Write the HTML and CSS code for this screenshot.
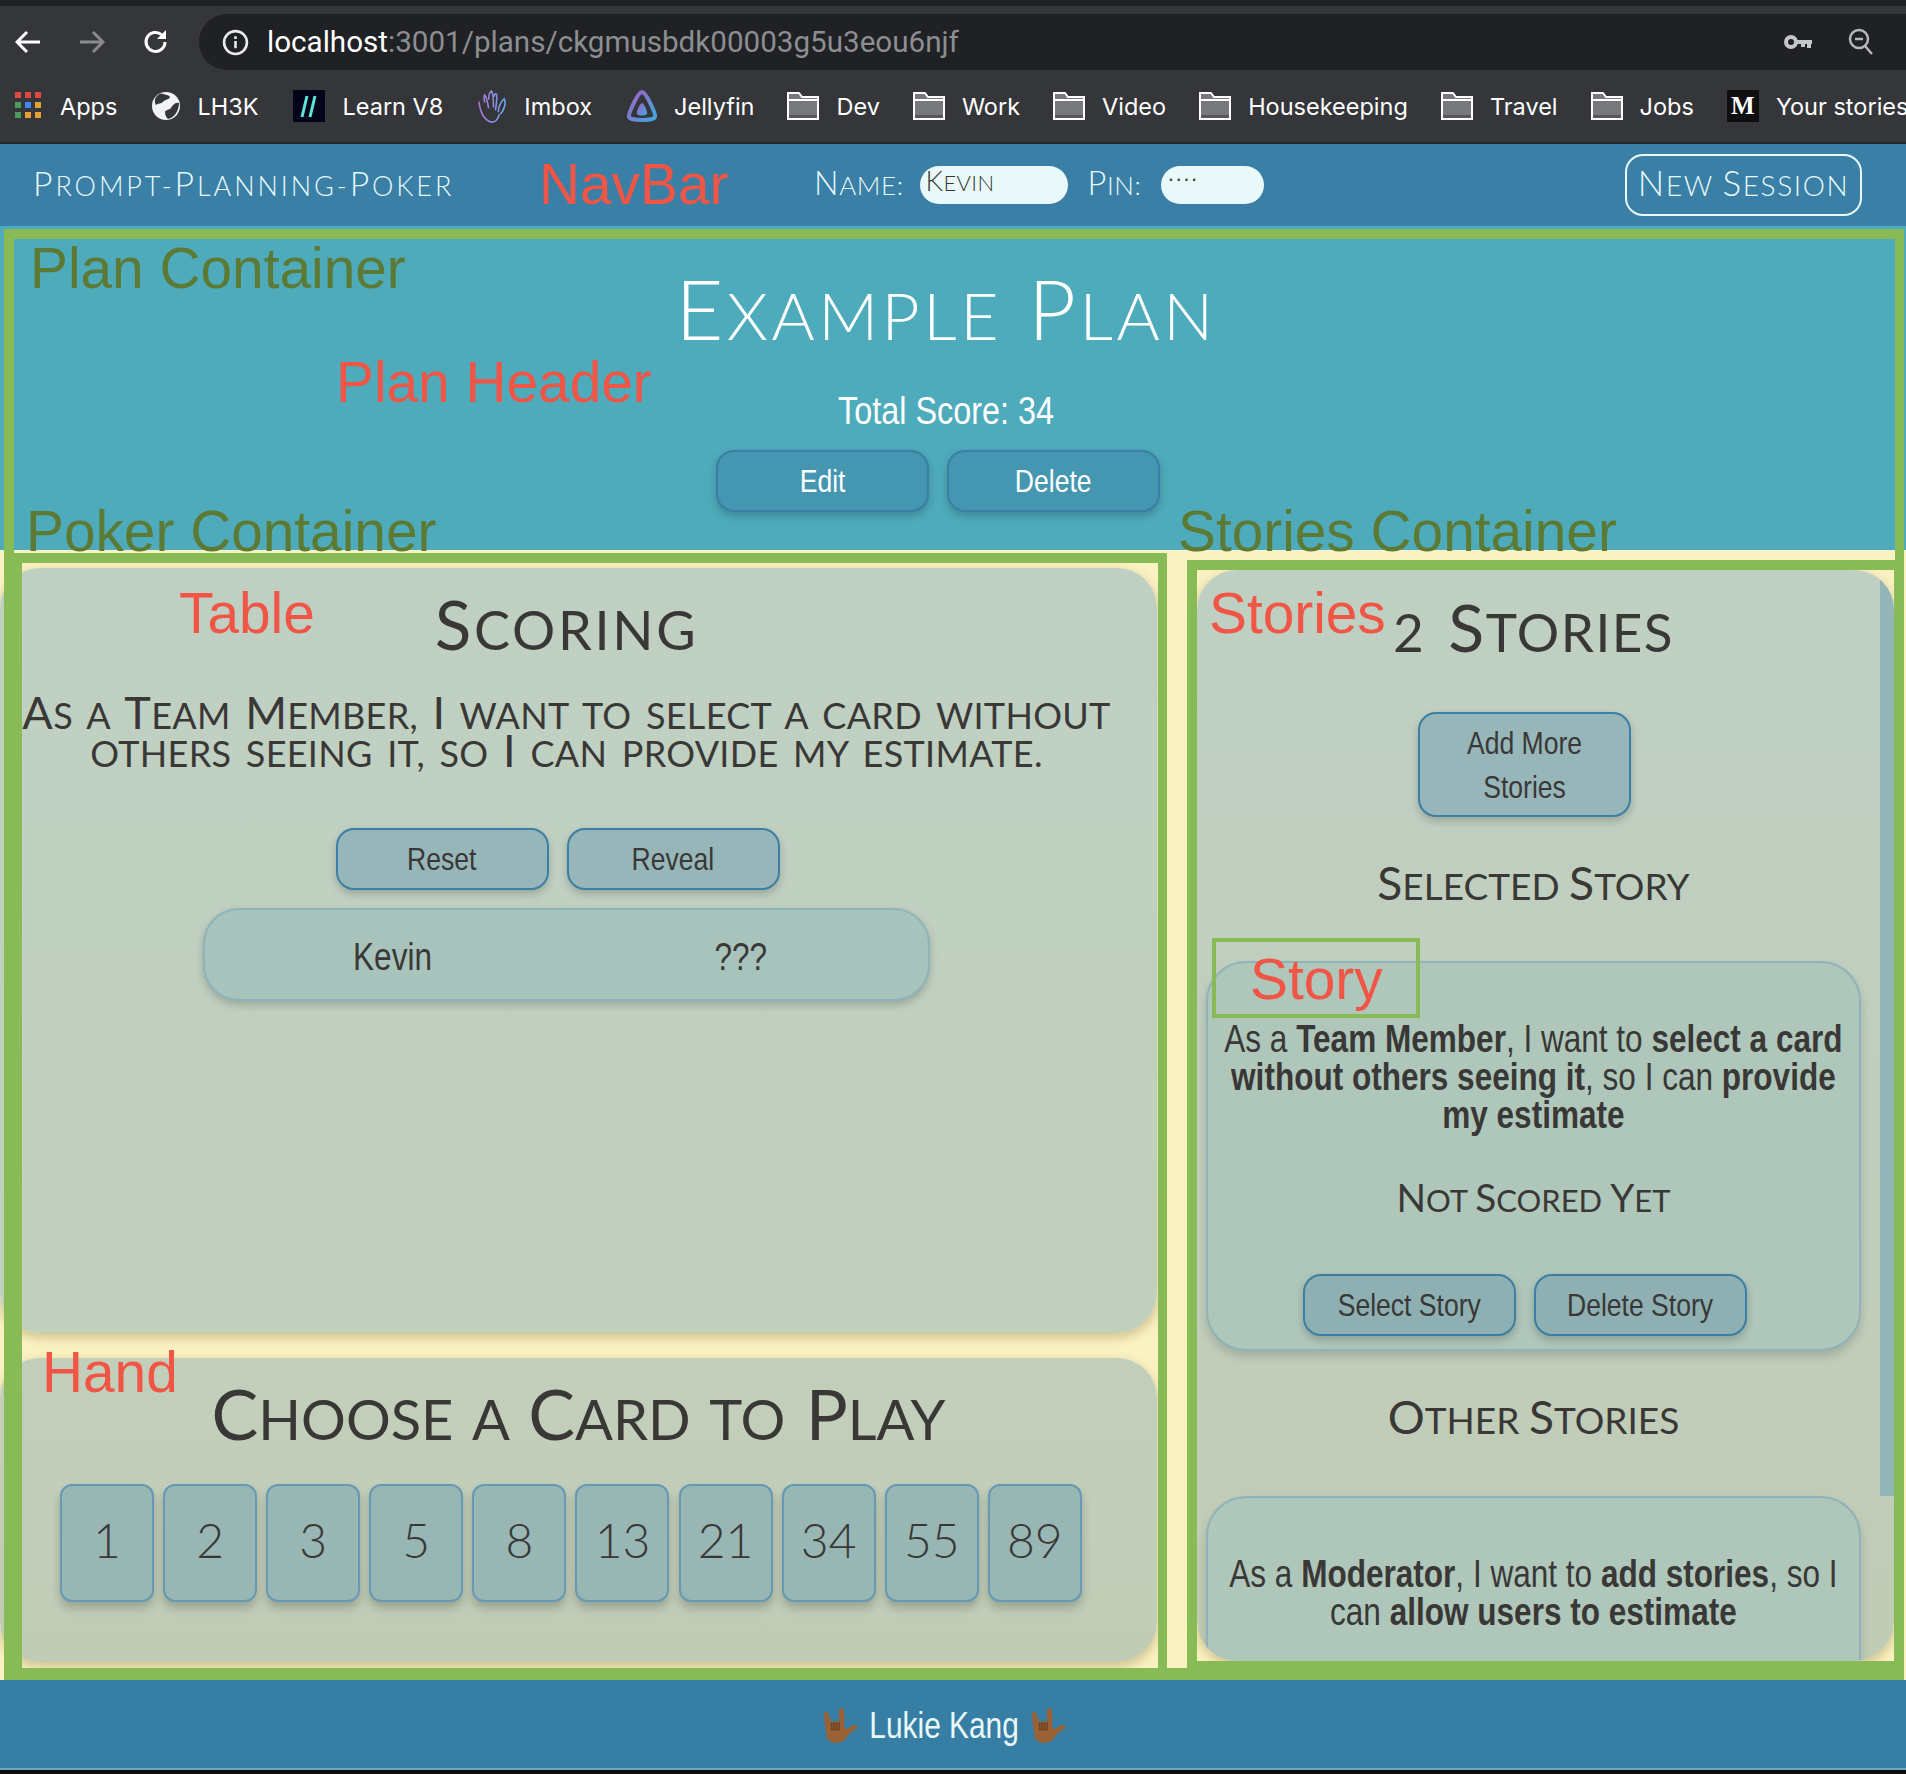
FILE: index.html
```html
<!DOCTYPE html>
<html lang="en">
<head>
  <meta charset="UTF-8" />
  <title>Prompt-Planning-Poker</title>
  <link rel="stylesheet" href="styles.css">
</head>
<body>

  <div class="browser">
    <div class="tabstrip"></div>
    <div class="toolbar">
      <svg class="tool-icon back" viewBox="0 0 26 24"><path d="M25 12H3M12 2L2 12l10 10" /></svg>
      <svg class="tool-icon forward" viewBox="0 0 26 24"><path d="M1 12h22M14 2l10 10-10 10" /></svg>
      <svg class="tool-icon reload" viewBox="0 0 26 26"><path d="M22 13a9.500 9.500 0 1 1-3-7" /><path class="solid" d="M23 1v9h-9z" /></svg>
      <div class="urlbar">
        <svg class="info-icon" viewBox="0 0 26 26"><circle cx="13" cy="13" r="11" /><path d="M13 11.500v7M13 7v2.600" /></svg>
        <span class="url"><b>localhost</b>:3001/plans/ckgmusbdk00003g5u3eou6njf</span>
        <svg class="key-icon" viewBox="0 0 30 18"><circle cx="8" cy="9" r="5" /><path d="M12 9h17M26 9v6M20 9v5" /></svg>
        <svg class="zoom-icon" viewBox="0 0 26 28"><circle cx="11" cy="11" r="9" /><path d="M7 11h8M17 18l7 8" /></svg>
      </div>
    </div>
    <div class="bookmarks">
      <div class="bookmark">
        <svg class="bm-apps" viewBox="0 0 28 28">
          <rect x="0" y="0" width="6" height="6" fill="#e0483f" /><rect x="10" y="0" width="6" height="6" fill="#e0483f" /><rect x="20" y="0" width="6" height="6" fill="#e0483f" />
          <rect x="0" y="10" width="6" height="6" fill="#4f9a5f" /><rect x="10" y="10" width="6" height="6" fill="#4285f4" /><rect x="20" y="10" width="6" height="6" fill="#e3a034" />
          <rect x="0" y="20" width="6" height="6" fill="#4f9a5f" /><rect x="10" y="20" width="6" height="6" fill="#e3a034" /><rect x="20" y="20" width="6" height="6" fill="#e3a034" />
        </svg>
        Apps
      </div>
      <div class="bookmark">
        <svg class="bm-globe" viewBox="0 0 28 28">
          <circle cx="14" cy="14" r="14" fill="#f1f3f4" />
          <path d="M9 1.500c4 1 8 1.500 9 3.500-1 3-5 2-7 5-2 2-5 1-7 3-2-3-2-9 5-11.500zM27 11c-4-1-7 3-8 5s-5 1-6 4c0 3 1 5 3 7 6-1 11-8 11-16z" fill="#35363a" />
        </svg>
        LH3K
      </div>
      <div class="bookmark">
        <svg class="bm-v8" viewBox="0 0 32 32">
          <rect width="32" height="32" fill="#03041a" />
          <path d="M14 6l-5 21M22 6l-5 21" stroke="#5fe3d6" stroke-width="3" fill="none" />
        </svg>
        Learn V8
      </div>
      <div class="bookmark">
        <svg class="bm-imbox" viewBox="0 0 30 34">
          <defs><linearGradient id="handGrad" x1="0" x2="1" y1="0" y2="0"><stop offset="0" stop-color="#b173d8" /><stop offset="1" stop-color="#6ea6ee" /></linearGradient></defs>
          <path d="M1 12c1 9 4 18 12 21 5 1 8-3 9-8M7 13C6 9 6 6 7 5c2 3 3 8 4 14M11 10c0-4 1-8 3-9 2 3 2 10 2 17M16 7c1-2 2-4 3-3 1 4 0 11-1 17M21 23c0-6 3-11 6-14 2 3 1 11-4 16" stroke="url(#handGrad)" stroke-width="1.600" fill="none" />
        </svg>
        Imbox
      </div>
      <div class="bookmark">
        <svg class="bm-jelly" viewBox="0 0 30 32">
          <defs><linearGradient id="jellyGrad" x1="0" x2="1" y1="0" y2="1"><stop offset="0" stop-color="#a45fc6" /><stop offset="1" stop-color="#3fa8dc" /></linearGradient></defs>
          <path d="M15 2C11 2 1 24 2 27c1 4 25 4 26 0 1-3-9-25-13-25z" fill="none" stroke="url(#jellyGrad)" stroke-width="4" />
          <path d="M15 13c-2 0-6 9-5 11s9 2 10 0-3-11-5-11z" fill="url(#jellyGrad)" />
        </svg>
        Jellyfin
      </div>
      <div class="bookmark"><svg class="bm-folder" viewBox="0 0 32 28"><use href="#folder" /></svg>Dev</div>
      <div class="bookmark"><svg class="bm-folder" viewBox="0 0 32 28"><use href="#folder" /></svg>Work</div>
      <div class="bookmark"><svg class="bm-folder" viewBox="0 0 32 28"><use href="#folder" /></svg>Video</div>
      <div class="bookmark"><svg class="bm-folder" viewBox="0 0 32 28"><use href="#folder" /></svg>Housekeeping</div>
      <div class="bookmark"><svg class="bm-folder" viewBox="0 0 32 28"><use href="#folder" /></svg>Travel</div>
      <div class="bookmark"><svg class="bm-folder" viewBox="0 0 32 28"><use href="#folder" /></svg>Jobs</div>
      <div class="bookmark"><span class="bm-medium">M</span>Your stories</div>
    </div>
    <svg class="defs-only" width="0" height="0">
      <symbol id="folder" viewBox="0 0 32 28">
        <path d="M1 1h11l3 4h16v22H1z" fill="#77787b" stroke="#fff" stroke-width="2" />
        <path d="M1 8h30" stroke="#fff" stroke-width="2" />
        <path d="M2 23h28v3H2z" fill="#55565a" />
      </symbol>
    </svg>
  </div>

  <nav class="navbar">
    <div class="brand caps"><span class="big">P</span>rompt-<span class="big">P</span>lanning-<span class="big">P</span>oker</div>
    <div class="session">
      <label class="caps"><span class="big">N</span>ame:</label>
      <div class="field field-name caps"><span class="big">K</span>evin</div>
      <label class="caps"><span class="big">P</span>in:</label>
      <div class="field field-pin">····</div>
    </div>
    <button class="new-session caps"><span class="big">N</span>ew <span class="big">S</span>ession</button>
  </nav>

  <header class="plan-header">
    <h1 class="plan-title caps"><span class="big">E</span>xample <span class="big">P</span>lan</h1>
    <p class="total-score"><span class="narrow">Total Score: 34</span></p>
    <div class="btn-row">
      <button class="btn btn-plan"><span class="narrow">Edit</span></button>
      <button class="btn btn-plan"><span class="narrow">Delete</span></button>
    </div>
  </header>

  <main class="board">
    <section class="poker">
      <div class="table panel">
        <h2 class="section-title scoring-title caps"><span class="big">S</span>coring</h2>
        <p class="current-story caps"><span class="big">A</span>s a <span class="big">T</span>eam <span class="big">M</span>ember, <span class="big">I</span> want to select a card without<br>others seeing it, so <span class="big">I</span> can provide my estimate.</p>
        <div class="btn-row table-btns">
          <button class="btn"><span class="narrow">Reset</span></button>
          <button class="btn"><span class="narrow">Reveal</span></button>
        </div>
        <div class="player">
          <span><span class="narrow">Kevin</span></span>
          <span><span class="narrow">???</span></span>
        </div>
      </div>
      <div class="hand panel">
        <h2 class="section-title choose-title caps"><span class="big">C</span>hoose a <span class="big">C</span>ard to <span class="big">P</span>lay</h2>
        <div class="cards">
          <button class="card">1</button>
          <button class="card">2</button>
          <button class="card">3</button>
          <button class="card">5</button>
          <button class="card">8</button>
          <button class="card">13</button>
          <button class="card">21</button>
          <button class="card">34</button>
          <button class="card">55</button>
          <button class="card">89</button>
        </div>
      </div>
    </section>

    <section class="stories-col">
      <div class="stories panel">
        <div class="scrollbar"></div>
        <h2 class="section-title stories-title caps">2 <span class="big">S</span>tories</h2>
        <button class="btn btn-add"><span class="narrow">Add More Stories</span></button>
        <h3 class="sub-title caps selected-title"><span class="big">S</span>elected <span class="big">S</span>tory</h3>
        <article class="story">
          <p class="story-text">As a <b>Team Member</b>, I want to <b>select a card without others seeing it</b>, so I can <b>provide my estimate</b></p>
          <h4 class="sub-title story-score caps"><span class="big">N</span>ot <span class="big">S</span>cored <span class="big">Y</span>et</h4>
          <div class="btn-row story-btns">
            <button class="btn btn-story"><span class="narrow">Select Story</span></button>
            <button class="btn btn-story"><span class="narrow">Delete Story</span></button>
          </div>
        </article>
        <h3 class="sub-title caps other-title"><span class="big">O</span>ther <span class="big">S</span>tories</h3>
        <article class="story story-other">
          <p class="story-text">As a <b>Moderator</b>, I want to <b>add stories</b>, so I can <b>allow users to estimate</b></p>
        </article>
      </div>
    </section>
  </main>

  <footer class="footer">
    <svg class="rock" viewBox="0 0 36 36"><use href="#rockHand" /></svg>
    <span class="narrow footer-name">Lukie Kang</span>
    <svg class="rock" viewBox="0 0 36 36"><use href="#rockHand" /></svg>
    <svg class="defs-only" width="0" height="0">
      <symbol id="rockHand" viewBox="0 0 36 36">
        <path d="M2 7Q1 4 4 4Q6 4 7 7L9 14L17 13L17 3Q17 0 19.500 0Q22 0 22 3L22.500 21Q27 20 32 17Q35 16 35.500 18.500Q35.500 20 33 21.500L27 26Q22 35 14 35Q5 35 4 25Z" fill="#9a6136" />
        <path d="M9.500 15h8v7h-8zM12 15v7M14.800 15v7" stroke="#6f4424" stroke-width="1.200" fill="#8a5630" />
      </symbol>
    </svg>
  </footer>
  <div class="taskstrip"></div>

  <!-- annotation overlays -->
  <div class="frame frame-plan"></div>
  <div class="frame frame-poker"></div>
  <div class="frame frame-stories"></div>
  <div class="frame frame-story"></div>

  <div class="note red note-navbar">NavBar</div>
  <div class="note green note-plan">Plan Container</div>
  <div class="note red note-header">Plan Header</div>
  <div class="note green note-poker">Poker Container</div>
  <div class="note green note-stories-box">Stories Container</div>
  <div class="note red note-table">Table</div>
  <div class="note red note-stories">Stories</div>
  <div class="note red note-story">Story</div>
  <div class="note red note-hand">Hand</div>

</body>
</html>
```

FILE: styles.css
```css
body {
  margin: 0;
  width: 1906px;
  height: 1774px;
  overflow: hidden;
  position: relative;
  background: #fbf2c4;
  color: #3a3836;
  font-family: "Liberation Sans", sans-serif;
}
h1, h2, h3, h4, p {
  margin: 0;
  font-weight: normal;
}
button {
  font-family: inherit;
  cursor: pointer;
}
.caps {
  font-family: "Lato", sans-serif;
  font-weight: 300;
  text-transform: uppercase;
}
.big {
  font-size: 1.25em;
  line-height: 0;
}
/* no narrow family here, so squeeze the sans */
.narrow {
  display: inline-block;
  transform: scaleX(0.83);
}
.defs-only {
  position: absolute;
}

/* browser chrome */
.browser {
  height: 144px;
  background: #35363a;
  border-bottom: 2px solid #26272a;
  box-sizing: border-box;
  font-family: "Inter", sans-serif;
  color: #fff;
}
.tabstrip {
  height: 6px;
  background: #202124;
}
.toolbar {
  height: 64px;
  display: flex;
  align-items: flex-start;
  padding-left: 15px;
  box-sizing: border-box;
}
.tool-icon {
  width: 26px;
  height: 24px;
  margin-top: 24px;
  fill: none;
  stroke: #fff;
  stroke-width: 3;
}
.tool-icon .solid {
  fill: #fff;
  stroke: none;
}
.forward {
  margin-left: 38px;
  stroke: #8a8b8e;
}
.reload {
  margin-left: 38px;
  height: 26px;
  margin-top: 23px;
}
.urlbar {
  flex: 1;
  height: 56px;
  margin: 8px 0 0 30px;
  padding: 0 31px 0 23px;
  background: #202124;
  border-radius: 28px 0 0 28px;
  display: flex;
  align-items: center;
  font-family: "Roboto", sans-serif;
  font-size: 29.600px;
  color: #8c8e91;
}
.url b {
  font-weight: normal;
  color: #fff;
}
.info-icon {
  width: 27px;
  height: 27px;
  margin-right: 18px;
  fill: none;
  stroke: #e8eaed;
  stroke-width: 2.500;
}
.key-icon {
  width: 30px;
  height: 18px;
  margin-left: auto;
  fill: none;
  stroke: #c4c6c9;
  stroke-width: 4;
}
.zoom-icon {
  width: 28px;
  height: 28px;
  margin-left: 34px;
  fill: none;
  stroke: #b5b7ba;
  stroke-width: 2.500;
}
.bookmarks {
  height: 72px;
  display: flex;
  align-items: center;
  gap: 33px;
  padding-left: 15px;
  font-size: 23.500px;
  white-space: nowrap;
}
.bookmark {
  display: flex;
  align-items: center;
  gap: 17px;
}
.bookmark:nth-child(-n+4) {
  margin-right: 2px;
}
.bm-apps {
  width: 28px;
  height: 28px;
}
.bm-globe {
  width: 28px;
  height: 28px;
}
.bm-v8 {
  width: 32px;
  height: 32px;
}
.bm-imbox {
  width: 29px;
  height: 33px;
}
.bm-jelly {
  width: 30px;
  height: 32px;
}
.bm-folder {
  width: 32px;
  height: 28px;
}
.bm-medium {
  width: 32px;
  height: 32px;
  background: #0f0f0f;
  color: #fff;
  font: bold 25px/32px "Liberation Serif", serif;
  text-align: center;
}

/* navbar */
.navbar {
  height: 82px;
  padding: 0 44px 0 33px;
  box-sizing: border-box;
  background: #3a7fa5;
  color: #e9f9fa;
  display: flex;
  align-items: center;
}
.brand {
  width: 781px;
  font-size: 27px;
  letter-spacing: 2.900px;
  line-height: 1;
}
.session {
  display: flex;
  align-items: center;
  font-size: 26px;
  letter-spacing: 0.600px;
}
.session label {
  margin-right: 16px;
}
.field {
  height: 38px;
  background: #e9f9fa;
  color: #3a3836;
  border-radius: 19px;
  padding: 0 6px;
  box-sizing: border-box;
  font-size: 22px;
  line-height: 34px;
  letter-spacing: 0.400px;
}
.field-name {
  width: 148px;
  margin-right: 20px;
}
.field-pin {
  width: 103px;
  margin-left: 4px;
  font-size: 22px;
  line-height: 26px;
}
.new-session {
  margin-left: auto;
  width: 237px;
  height: 62px;
  padding: 0;
  background: transparent;
  color: #e9f9fa;
  border: 2px solid #e9f9fa;
  border-radius: 18px;
  font-size: 28px;
  letter-spacing: 1.600px;
  white-space: nowrap;
}

/* plan header */
.plan-header {
  height: 324px;
  box-sizing: border-box;
  padding: 44px 14px 0 0;
  background: #4eabbb;
  color: #fff;
  text-align: center;
}
.plan-title {
  font-size: 66px;
  line-height: 90px;
  letter-spacing: 3.500px;
  word-spacing: 5px;
  font-weight: 300;
}
.total-score {
  margin-top: 31px;
  font-size: 39px;
  line-height: 40px;
}
.btn-row {
  display: flex;
  justify-content: center;
  gap: 18px;
}
.plan-header .btn-row {
  margin: 19px 16px 0 0;
}
.btn {
  width: 213px;
  height: 62px;
  padding: 0;
  background: #97b6b9;
  color: #3a3836;
  border: 2px solid #3a7fa5;
  border-radius: 18px;
  box-shadow: 0 4px 8px rgba(0,0,0,0.2);
  font-size: 32px;
}
.btn-plan {
  background: #4596b0;
  color: #fff;
}

/* main board */
.board {
  height: 1130px;
  display: grid;
  grid-template-columns: 1167px minmax(0, 1fr);
}
.poker {
  display: flex;
  flex-direction: column;
  gap: 25px;
  padding: 18px 10px 18px 0;
  box-sizing: border-box;
  height: 1130px;
}
.panel {
  border-radius: 40px;
  box-shadow: 0 4px 12px rgba(130,110,40,0.4);
  text-align: center;
}
.table {
  height: 765px;
  padding: 32px 24px 0 0;
  box-sizing: border-box;
  background: linear-gradient(#bfd0c3, #c1d0bd);
}
.section-title {
  line-height: 60px;
  font-weight: 400;
}
.scoring-title {
  font-size: 54px;
  letter-spacing: 2.700px;
}
.current-story {
  margin-top: 36px;
  font-size: 36px;
  line-height: 38px;
  font-weight: 400;
  letter-spacing: 0.300px;
  word-spacing: 5px;
  white-space: nowrap;
}
.table-btns {
  margin: 56px 18px 0 0;
}
.player {
  width: 727px;
  height: 93px;
  margin: 18px auto 0;
  box-sizing: border-box;
  background: #a8c2bc;
  border: 2px solid #8fb3bb;
  border-radius: 36px;
  box-shadow: 0 4px 8px rgba(0,0,0,0.2);
  display: grid;
  grid-template-columns: 1fr 1fr;
  align-items: center;
  padding: 6px 14px 0;
  font-size: 38px;
}
.hand {
  height: 304px;
  padding-top: 31px;
  box-sizing: border-box;
  background: linear-gradient(#c2cfbb, #c1ccb6);
}
.choose-title {
  font-size: 56px;
  word-spacing: 6px;
}
.cards {
  display: flex;
  gap: 9.100px;
  margin-top: 35px;
  padding-left: 60px;
}
.card {
  width: 94px;
  height: 118px;
  padding: 0 0 8px;
  background: #97b6b4;
  color: #3a3836;
  border: 2px solid #659ab4;
  border-radius: 12px;
  box-shadow: 0 6px 10px rgba(0,0,0,0.2);
  font-family: "Lato", sans-serif;
  font-weight: 300;
  font-size: 48px;
}

/* stories column */
.stories-col {
  padding: 20px 12px 19px 30px;
  height: 1130px;
  box-sizing: border-box;
}
.stories {
  height: 100%;
  position: relative;
  overflow: hidden;
  padding: 32px 33px 0 9px;
  box-sizing: border-box;
  background: linear-gradient(#bfd0c3, #c1ccb6);
}
.stories-title {
  font-size: 53px;
  letter-spacing: 1.500px;
  word-spacing: 8px;
}
.scrollbar {
  position: absolute;
  top: 8px;
  right: 0;
  width: 14px;
  height: 918px;
  background: #94b5b8;
}
.btn-add {
  display: block;
  width: 213px;
  height: 105px;
  margin: 50px auto 0;
  position: relative;
  left: -9px;
  line-height: 44px;
  padding: 0 30px;
}
.sub-title {
  font-size: 37px;
  line-height: 44px;
  font-weight: 400;
}
.selected-title {
  margin-top: 47px;
}
.story {
  margin-top: 53px;
  height: 390px;
  padding: 57px 10px 0;
  box-sizing: border-box;
  background: #afc6ba;
  border: 2px solid #8fb3bb;
  border-radius: 40px;
  box-shadow: 0 6px 10px rgba(0,0,0,0.15);
}
.story-text {
  width: 760px;
  margin-right: -129px;
  font-size: 38px;
  line-height: 38px;
  transform: scaleX(0.83);
  transform-origin: 0 0;
}
.story-score {
  margin-top: 44px;
  font-size: 31px;
}
.story-btns {
  margin: 52px 18px 0 0;
}
.btn-story {
  background: #8eb0b3;
}
.other-title {
  margin-top: 47px;
}
.story-other {
  margin-top: 54px;
}

/* footer */
.footer {
  height: 85px;
  padding: 3px 18px 0 0;
  background: #377ea4;
  border-bottom: 2px solid #6fa6c2;
  color: #e9f9fa;
  display: flex;
  align-items: center;
  justify-content: center;
  gap: 8px;
  font-size: 36px;
}
.footer-name {
  margin: 0 -12px;
}
.rock {
  width: 36px;
  height: 36px;
}
.taskstrip {
  height: 4px;
  background: #0c0c0c;
}

/* annotation overlays, drawn on top of the app */
.frame {
  position: absolute;
  box-sizing: border-box;
  border: 0 solid #88ba56;
}
.frame-plan {
  left: 4px;
  top: 229px;
  width: 1900px;
  height: 1451px;
  border-width: 10px 9px 12px 10px;
}
.frame-poker {
  left: 4px;
  top: 553px;
  width: 1163px;
  height: 1127px;
  border-width: 10px 9px 12px 18px;
}
.frame-stories {
  left: 1187px;
  top: 560px;
  width: 717px;
  height: 1118px;
  border-width: 10px 10px 17px 10px;
}
.frame-story {
  left: 1212px;
  top: 938px;
  width: 208px;
  height: 80px;
  border-width: 4px;
}
.note {
  position: absolute;
  font-family: "Liberation Sans", sans-serif;
  font-size: 56.800px;
  line-height: 60px;
  white-space: nowrap;
}
.red {
  color: #f05545;
}
.green {
  color: #5c7a34;
}
.note-navbar { left: 539px; top: 155px; }
.note-plan { left: 30px; top: 239px; }
.note-header { left: 336px; top: 353px; }
.note-poker { left: 26px; top: 502px; }
.note-stories-box { left: 1178px; top: 502px; }
.note-table { left: 179px; top: 584px; }
.note-stories { left: 1209px; top: 584px; }
.note-story { left: 1250px; top: 950px; }
.note-hand { left: 42px; top: 1343px; }
```
